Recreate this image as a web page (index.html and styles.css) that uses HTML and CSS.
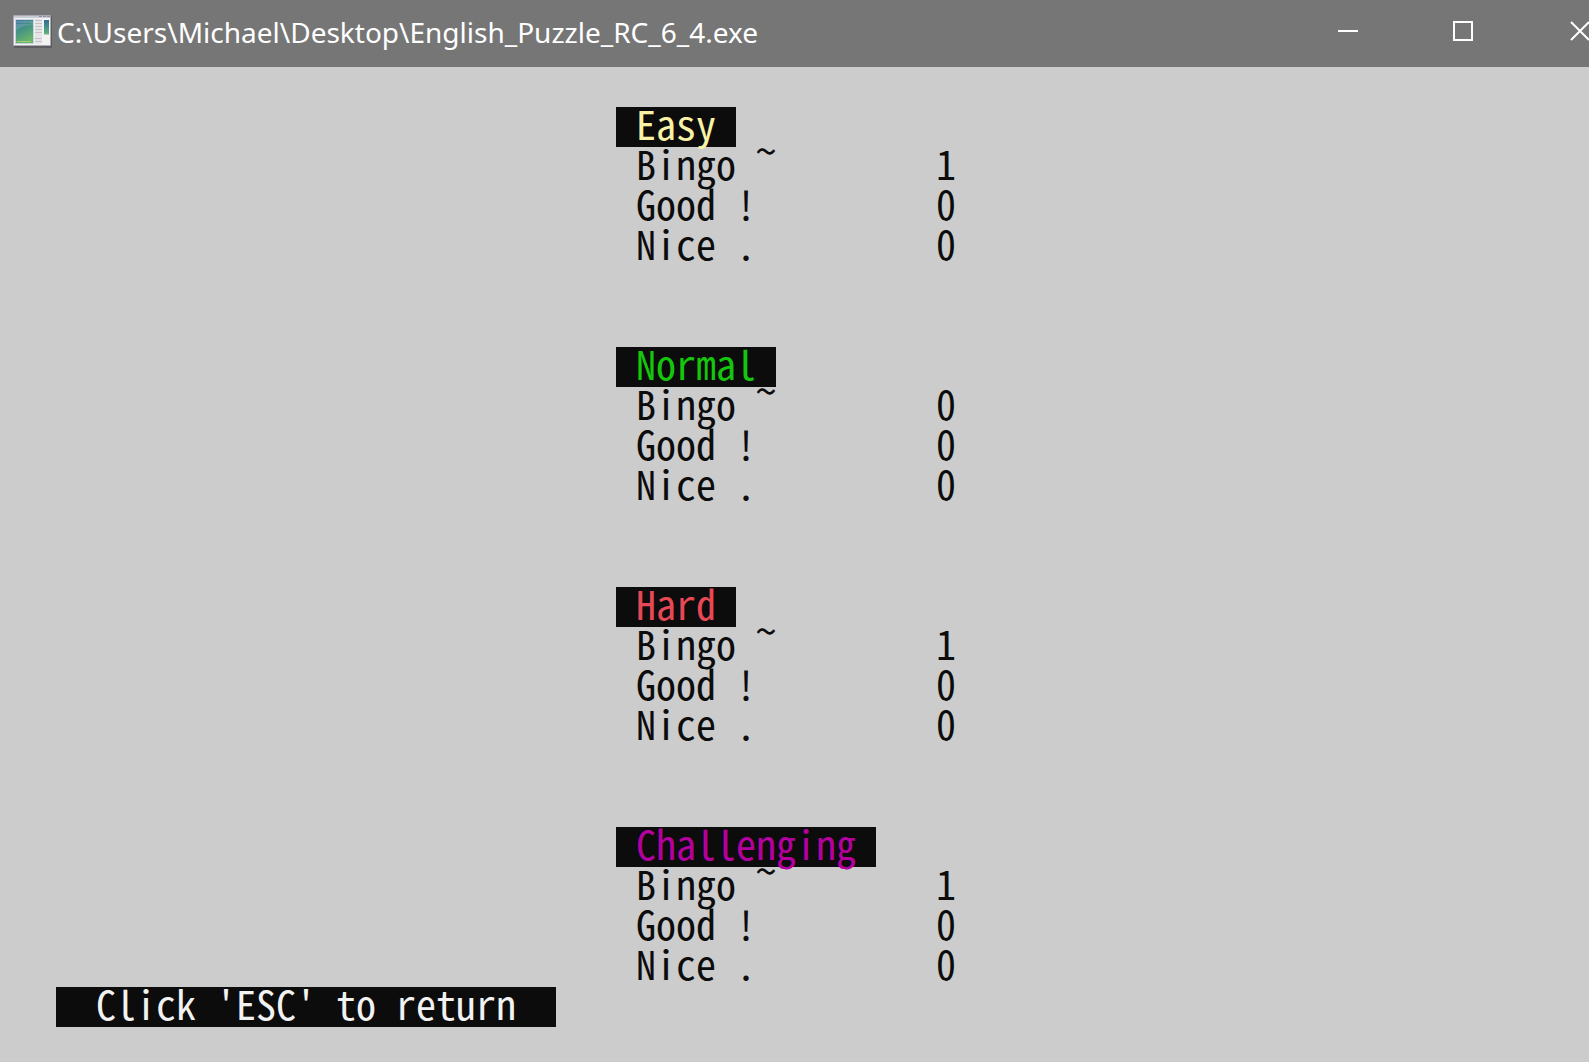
FILE: index.html
```html
<!DOCTYPE html>
<html lang="en">
<head>
<meta charset="utf-8">
<meta name="viewport" content="width=device-width, initial-scale=1">
<title>English Puzzle</title>
<link rel="stylesheet" href="styles.css">
</head>
<body>
<header class="titlebar">
  <svg class="app-icon" viewBox="0 0 40 34" aria-hidden="true">
    <defs>
      <linearGradient id="pane" x1="0" y1="0" x2="0.4" y2="1"><stop offset="0" stop-color="#4379a3"/><stop offset="0.5" stop-color="#459384"/><stop offset="1" stop-color="#6bb46a"/></linearGradient>
      <linearGradient id="strip" x1="0" y1="0" x2="0" y2="1"><stop offset="0" stop-color="#2d6c94"/><stop offset="1" stop-color="#5fb47a"/></linearGradient>
    </defs>
    <rect x="1" y="1" width="38" height="32" rx="1" fill="#5c5c60"/>
    <rect x="0" y="0" width="38" height="31" rx="1" fill="#a9a9b2"/>
    <rect x="1" y="3" width="36" height="27" fill="#f2f2f3"/>
    <rect x="1" y="1" width="36" height="2" fill="#c9ccd6"/>
    <path d="M26 1h3v1h-3zM30 1h3v1h-3zM34 1h3v1h-3z" fill="#8b909c"/>
    <rect x="2" y="4" width="19" height="25" fill="#c9d2dc"/>
    <rect x="3" y="5" width="17" height="23" fill="url(#pane)"/>
    <path d="M3 8h15v1H3zM3 15c6-4 11-5 17-5v-4H3z" fill="#fff" opacity=".13"/>
    <path d="M4 26.500h14" stroke="#a4ce72"/>
    <rect x="22" y="4" width="7" height="25" fill="#e5e5e8"/>
    <path d="M22 5.500h7M22 8.500h7M22 11.500h7M22 14.500h7M22 17.500h7M22 23.500h7M22 26.500h7" stroke="#c3c3c8"/>
    <rect x="31" y="5" width="5" height="14" fill="url(#strip)"/>
    <path d="M31 19.500h5" stroke="#b4ccbd"/>
  </svg>
  <h1 class="title">C:\Users\Michael\Desktop\English_Puzzle_RC_6_4.exe</h1>
  <div class="controls">
    <button type="button" aria-label="Minimize"><svg viewBox="0 0 20 20" aria-hidden="true"><path d="M0 10h20"/></svg></button>
    <button type="button" aria-label="Maximize"><svg viewBox="0 0 20 20" aria-hidden="true"><path d="M0 1h18v18H0z"/></svg></button>
    <button type="button" aria-label="Close"><svg viewBox="0 0 20 20" aria-hidden="true"><path d="M1 1l18 18M19 1L1 19"/></svg></button>
  </div>
</header>
<main class="console">
  <div class="scores">
    <section>
      <h2 class="level easy">Easy</h2>
      <table>
        <tr><th scope="row">Bingo <span class="tilde">~</span></th><td>1</td></tr>
        <tr><th scope="row">Good !</th><td>0</td></tr>
        <tr><th scope="row">Nice .</th><td>0</td></tr>
      </table>
    </section>
    <section>
      <h2 class="level normal">Normal</h2>
      <table>
        <tr><th scope="row">Bingo <span class="tilde">~</span></th><td>0</td></tr>
        <tr><th scope="row">Good !</th><td>0</td></tr>
        <tr><th scope="row">Nice .</th><td>0</td></tr>
      </table>
    </section>
    <section>
      <h2 class="level hard">Hard</h2>
      <table>
        <tr><th scope="row">Bingo <span class="tilde">~</span></th><td>1</td></tr>
        <tr><th scope="row">Good !</th><td>0</td></tr>
        <tr><th scope="row">Nice .</th><td>0</td></tr>
      </table>
    </section>
    <section>
      <h2 class="level challenging">Challenging</h2>
      <table>
        <tr><th scope="row">Bingo <span class="tilde">~</span></th><td>1</td></tr>
        <tr><th scope="row">Good !</th><td>0</td></tr>
        <tr><th scope="row">Nice .</th><td>0</td></tr>
      </table>
    </section>
  </div>
  <button type="button" class="return">Click 'ESC' to return</button>
</main>
</body>
</html>
```
FILE: styles.css
```css
* {
  box-sizing: border-box;
}

body {
  margin: 0;
  background: #cccccc;
  color: #0c0c0c;
}

.titlebar {
  display: flex;
  align-items: center;
  height: 67px;
  padding-left: 13px;
  overflow: hidden;
  background: #767676;
  color: #ffffff;
}

.app-icon {
  flex: none;
  width: 40px;
  height: 34px;
  margin-bottom: 4px;
}

.title {
  flex: 1;
  min-width: 0;
  margin: 0;
  padding: 0 0 4px 4px;
  font: 400 28px/40px "Noto Sans", "Open Sans", sans-serif;
  white-space: nowrap;
}

/* The close button runs past the right edge of the window. */
.controls {
  display: flex;
  flex: none;
  align-self: stretch;
  margin-right: -49px;
}

.controls button {
  display: flex;
  align-items: center;
  justify-content: center;
  width: 116px;
  padding: 0 0 5px;
  border: 0;
  background: none;
  color: inherit;
}

.controls svg {
  width: 20px;
  height: 20px;
  overflow: visible;
  fill: none;
  stroke: currentColor;
  stroke-width: 2;
}

/* Half-width forms put every character in a 20px cell. */
.console,
.return {
  font: 400 40px/32px "Noto Sans CJK JP", "Liberation Mono", monospace;
  font-feature-settings: "hwid" 1;
}

.console {
  display: grid;
  grid-template-columns: 500px 1fr;
  column-gap: 60px;
  padding: 40px 0 35px 56px;
}

.scores {
  display: grid;
  grid-column: 2;
  row-gap: 80px;
}

.level {
  width: fit-content;
  margin: 0;
  padding: 0 20px 8px;
  background: #0c0c0c;
  font: inherit;
}

.easy { color: #f9f1a5; }
.normal { color: #16c60c; }
.hard { color: #e74856; }
.challenging { color: #b4009e; }

table {
  border-collapse: collapse;
}

th,
td {
  height: 40px;
  padding: 0 0 8px;
  font-weight: 400;
  text-align: left;
}

th {
  width: 320px;
  padding-left: 20px;
}

.tilde {
  line-height: 0;
  vertical-align: 14px;
}

.return {
  grid-column: 1;
  height: 40px;
  padding: 0 40px 8px;
  border: 0;
  background: #0c0c0c;
  color: #f2f2f2;
  text-align: left;
  white-space: nowrap;
}
```
